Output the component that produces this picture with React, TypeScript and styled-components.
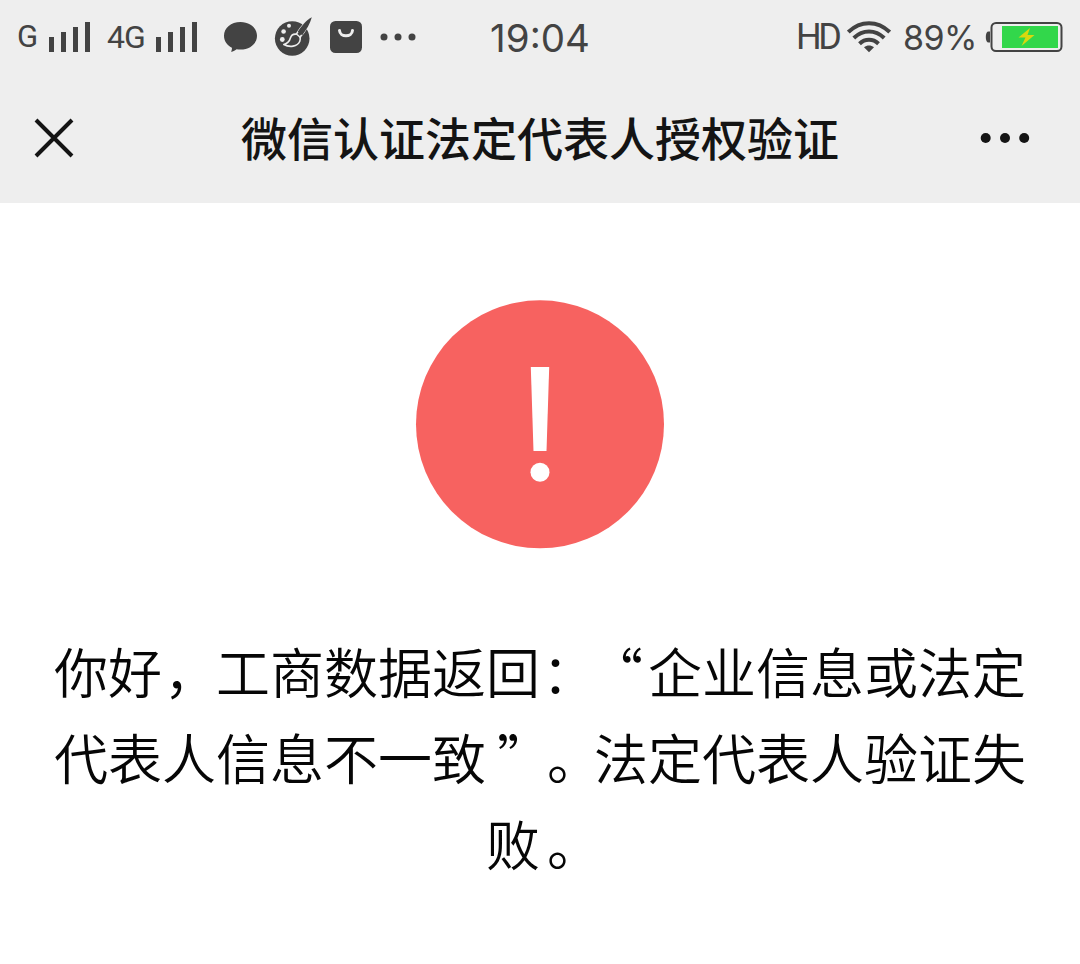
import React from 'react';
import styled, { createGlobalStyle } from 'styled-components';

const Colors = {
  bar: '#eeeeee',
  status: '#434343',
  title: '#141414',
  text: '#060606',
  warn: '#f76260',
  battery: '#32d74b',
};

const App = () => {
  return (
    <>
      <GlobalStyle />
      <Page>
        <StatusBar>
          <StatusLeft>
            <StatusText $size={31} $width={31}>
              G
            </StatusText>
            <SignalIcon />
            <StatusText $size={32} $width={48} $gap={16} $spacing={-1}>
              4G
            </StatusText>
            <SignalIcon />
            <Notices>
              <ChatIcon />
              <PaletteIcon />
              <BagIcon />
              <MoreIcon />
            </Notices>
          </StatusLeft>
          <Clock>19:04</Clock>
          <StatusRight>
            <StatusText $size={36} $width={51} $spacing={-3.5}>
              HD
            </StatusText>
            <WifiIcon />
            <Percent>89%</Percent>
            <BatteryIcon />
          </StatusRight>
        </StatusBar>
        <Header>
          <BtnIcon aria-label="关闭">
            <svg width="40" height="40" viewBox="0 0 40 40">
              <path d="M2 2L38 38M38 2L2 38" stroke={Colors.title} strokeWidth="4" />
            </svg>
          </BtnIcon>
          <HeaderName>微信认证法定代表人授权验证</HeaderName>
          <BtnIcon aria-label="更多">
            <svg width="50" height="12" viewBox="0 0 50 12" fill={Colors.title}>
              <circle cx="5.7" cy="6" r="5" />
              <circle cx="25" cy="6" r="5" />
              <circle cx="44.2" cy="6" r="5" />
            </svg>
          </BtnIcon>
        </Header>
        <Content>
          <WarnIcon />
          <Message>
            你好
            <Punct $before={2} $after={-2}>
              ，
            </Punct>
            工商数据返回
            <Punct $before={2} $after={-7}>
              ：
            </Punct>
            <Punct $before={0} $after={5}>
              “
            </Punct>
            企业信息或法定
            <br />
            代表人信息不一致
            <Punct $before={11} $after={-11}>
              ”
            </Punct>
            <Punct $before={7} $after={-7}>
              。
            </Punct>
            法定代表人验证失
            <br />
            败
            <Punct $before={7} $after={-7}>
              。
            </Punct>
          </Message>
        </Content>
      </Page>
    </>
  );
};

const SignalIcon = () => (
  <svg width="43" height="32" viewBox="0 0 43 32" fill={Colors.status}>
    <rect x="1" y="16" width="5" height="15" />
    <rect x="13" y="11" width="5" height="20" />
    <rect x="25" y="6" width="5" height="25" />
    <rect x="37" y="1" width="5" height="30" />
  </svg>
);

const ChatIcon = () => (
  <svg width="34" height="34" viewBox="0 0 34 34" fill={Colors.status}>
    <path d="M17.500 2C8 2 1 8 1 15.800c0 5.200 3 9.500 7.900 12 .2 1.500-.2 2.700-.9 3.900 2.500-.3 4.300-1.300 5.600-2.500 1.300.3 2.600.4 3.900.4 9.500 0 16.500-6 16.500-13.800S27 2 17.500 2z" />
  </svg>
);

const PaletteIcon = () => (
  <svg width="38" height="40" viewBox="0 0 38 40">
    <circle cx="18.200" cy="21.500" r="17.300" fill={Colors.status} />
    <g fill={Colors.bar}>
      <circle cx="8.300" cy="22.500" r="2.400" />
      <circle cx="9.600" cy="14.500" r="2.300" />
      <circle cx="15" cy="8.800" r="2" />
    </g>
    <path
      d="M36.800 1.200C31.500 4.500 26.500 10.500 22.300 17.200c-2.800-.4-5 1-5.800 3.600-.8 3-2.600 5.500-6.700 6.700 5.700 3.200 13.600 2.300 16-3.200.6-1.400.6-2.800.2-4.200 5-5.500 9-12.400 10.900-18.900z"
      fill={Colors.status}
      stroke={Colors.bar}
      strokeWidth="1.600"
      strokeLinejoin="round"
    />
    <path d="M37.800.3C32 3.500 27 9.500 23.800 14.800l4.400 3.500C32.500 12.500 36.300 6.500 37.800.3z" fill={Colors.status} />
    <path d="M21.800 16.500l5 4.300" stroke={Colors.bar} strokeWidth="1.500" />
  </svg>
);

const BagIcon = () => (
  <svg width="34" height="34" viewBox="0 0 34 34">
    <rect x="1" y="1" width="32" height="32" rx="5.500" fill={Colors.status} />
    <path d="M10.500 10.500c.5 7 12.500 7 13 0" fill="none" stroke={Colors.bar} strokeWidth="3" strokeLinecap="round" />
  </svg>
);

const MoreIcon = () => (
  <svg width="36" height="8" viewBox="0 0 36 8" fill={Colors.status}>
    <circle cx="4" cy="4" r="3.500" />
    <circle cx="18" cy="4" r="3.500" />
    <circle cx="32" cy="4" r="3.500" />
  </svg>
);

const WifiIcon = () => (
  <svg width="44" height="34" viewBox="0 0 44 34" fill="none" stroke={Colors.status} strokeWidth="4">
    <path d="M1.300 12C13.500.2 30.500.2 42.700 12" />
    <path d="M6.800 18C15.800 9.300 28.200 9.300 37.200 18" />
    <path d="M12.500 23.700C18 18.500 26 18.500 31.500 23.700" />
    <path d="M17 27.300c3-2.400 7-2.400 10 0l-5 5z" fill={Colors.status} stroke="none" />
  </svg>
);

const BatteryIcon = () => (
  <svg width="78" height="32" viewBox="0 0 78 32">
    <path d="M5 10.500v11H3.500C1.800 21.500.8 19.500.8 16s1-5.500 2.700-5.500z" fill={Colors.status} />
    <rect x="6.500" y="2" width="70" height="28" rx="4.500" fill="none" stroke={Colors.status} strokeWidth="2" />
    <rect x="17" y="5" width="56" height="22" fill={Colors.battery} />
    <path d="M45 7L33.500 16.500h7L36.500 25 49.500 14h-7z" fill="#d8d80f" />
  </svg>
);

const WarnIcon = () => (
  <svg width="250" height="250" viewBox="0 0 250 250">
    <circle cx="125" cy="125.300" r="124" fill={Colors.warn} />
    <path d="M115.800 68h18.400l-2.700 84h-13z" fill="#fff" />
    <circle cx="125" cy="173.200" r="9.500" fill="#fff" />
  </svg>
);

const GlobalStyle = createGlobalStyle`
  body {
    margin: 0;
    background: #fff;
  }
  svg {
    display: block;
    flex-shrink: 0;
  }
`;

const Page = styled.div`
  width: 1080px;
  height: 964px;
  overflow: hidden;
  background: #fff;
  font-family: 'Noto Sans CJK SC', sans-serif;
`;

const StatusBar = styled.div`
  display: grid;
  grid-template-columns: 1fr auto 1fr;
  align-items: center;
  height: 74px;
  padding: 0 17px;
  background: ${Colors.bar};
  color: ${Colors.status};
  font-family: Roboto, sans-serif;
`;

const StatusLeft = styled.div`
  display: flex;
  align-items: center;
`;

const StatusRight = styled.div`
  display: flex;
  align-items: center;
  justify-content: flex-end;
`;

const StatusText = styled.span<{ $size: number; $width: number; $gap?: number; $spacing?: number }>`
  flex-shrink: 0;
  width: ${({ $width }) => $width}px;
  margin-left: ${({ $gap }) => $gap || 0}px;
  font-size: ${({ $size }) => $size}px;
  letter-spacing: ${({ $spacing }) => $spacing || 0}px;
  line-height: 40px;
  white-space: nowrap;
`;

const Percent = styled.span`
  width: 82px;
  margin-left: 12px;
  padding-top: 2px;
  font-family: Inter, sans-serif;
  font-size: 34px;
  letter-spacing: -0.6px;
  line-height: 40px;
`;

const Notices = styled.div`
  display: flex;
  align-items: center;
  gap: 17px;
  margin-left: 25px;
`;

const Clock = styled.div`
  padding-top: 2px;
  font-family: Inter, sans-serif;
  font-size: 38.5px;
  line-height: 44px;
`;

const Header = styled.div`
  display: grid;
  grid-template-columns: 1fr auto 1fr;
  align-items: center;
  height: 129px;
  box-sizing: border-box;
  padding: 0 34px 2px;
  background: ${Colors.bar};
`;

const BtnIcon = styled.button`
  justify-self: start;
  padding: 0;
  background: none;
  border: none;
  cursor: pointer;

  &:last-child {
    justify-self: end;
    margin-right: 16px;
  }
`;

const HeaderName = styled.h2`
  margin: 0;
  padding-bottom: 4px;
  color: ${Colors.title};
  font-size: 46px;
  font-weight: 500;
  line-height: 60px;
`;

const Content = styled.div`
  display: flex;
  flex-direction: column;
  align-items: center;
  padding: 96px 50px 0;
`;

const Message = styled.p`
  width: 980px;
  margin: 79px 0 0;
  color: ${Colors.text};
  font-family: 'Noto Sans CJK SC DemiLight', 'Noto Sans CJK SC', sans-serif;
  font-size: 54px;
  font-weight: 350;
  line-height: 86px;
  text-align: center;
  white-space: nowrap;
  text-spacing-trim: space-all;
`;

// nudges a full-width mark inside its own cell
const Punct = styled.span<{ $before: number; $after: number }>`
  margin-left: ${({ $before }) => $before}px;
  letter-spacing: ${({ $after }) => $after}px;
`;

export default App;
